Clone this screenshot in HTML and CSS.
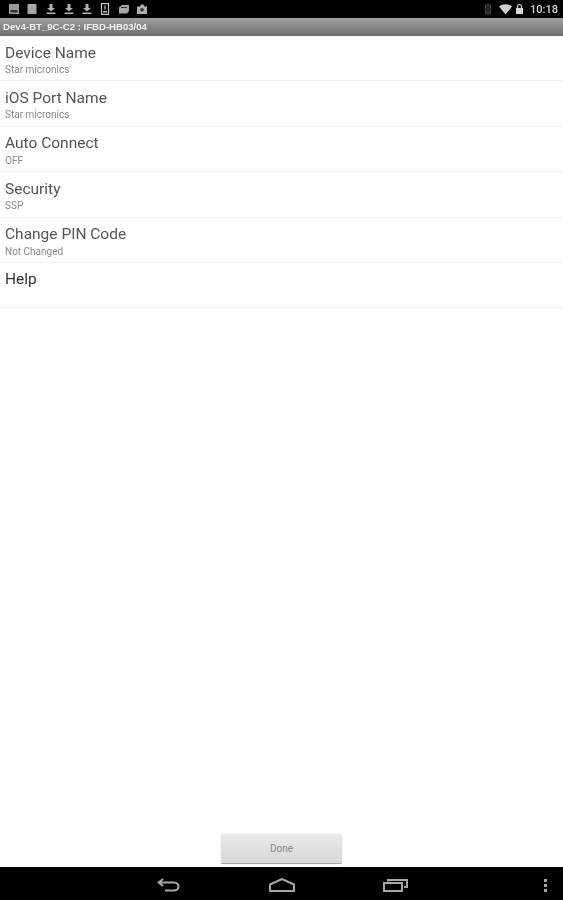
FILE: index.html
```html
<!DOCTYPE html>
<html lang="en">

<head>
    <meta charset="UTF-8">
    <meta name="viewport" content="width=device-width, initial-scale=1.0">
    <title>Device Settings</title>
    <link rel="stylesheet" href="styles.css">
</head>

<body>
    <div class="screen">
        <div class="status-bar">
            <div class="status-icons">
                <svg class="icon" width="12" height="12" viewBox="0 0 12 12"><path d="M1 1h10v10H1z" fill="#9a9a9a"/><path d="M2.500 7h7v2.500h-7z" fill="#333"/></svg>
                <svg class="icon" width="12" height="12" viewBox="0 0 12 12"><path d="M1.500 1h9v10h-9z" fill="#a8a8a8"/></svg>
                <svg class="icon" width="12" height="12" viewBox="0 0 12 12"><path d="M4.500 1h3v4H10L6 8.500 2 5h2.500zM1.500 9.500h9V11h-9z" fill="#b0b0b0"/></svg>
                <svg class="icon" width="12" height="12" viewBox="0 0 12 12"><path d="M4.500 1h3v4H10L6 8.500 2 5h2.500zM1.500 9.500h9V11h-9z" fill="#b0b0b0"/></svg>
                <svg class="icon" width="12" height="12" viewBox="0 0 12 12"><path d="M4.500 1h3v4H10L6 8.500 2 5h2.500zM1.500 9.500h9V11h-9z" fill="#b0b0b0"/></svg>
                <svg class="icon" width="12" height="12" viewBox="0 0 12 12"><path d="M2.500.7h7v10.600h-7z" fill="none" stroke="#c4c4c4" stroke-width="1.200"/><path d="M5.400 2.500h1.200v4H5.400zM4 8h4v1.500H4z" fill="#c4c4c4"/></svg>
                <svg class="icon" width="12" height="12" viewBox="0 0 12 12"><path d="M1 4.500 4 2h7v6l-2 2.500H1z" fill="#a8a8a8"/><path d="M3 4.500h6" stroke="#333"/></svg>
                <svg class="icon" width="12" height="12" viewBox="0 0 12 12"><path d="M1 3.500h3L5 1.500h2.500l1 2h2.500v7.500H1z" fill="#b0b0b0"/><circle cx="6" cy="6.800" r="1.800" fill="#333"/></svg>
            </div>
            <div class="status-right">
                <svg class="icon icon-battery" width="8" height="12" viewBox="0 0 8 12"><path d="M1.500 2h5v9h-5zM3 1h2" fill="#262626" stroke="#3c3c3c"/></svg>
                <svg class="icon" width="13" height="11" viewBox="0 0 13 11"><path d="M0 2.500C3.500-.5 9.500-.5 13 2.500L6.500 10.500z" fill="#d0d0d0"/></svg>
                <svg class="icon" width="9" height="12" viewBox="0 0 9 12"><path d="M2.500 5V3.500a2 2 0 0 1 4 0V5" fill="none" stroke="#d8d8d8" stroke-width="1.200"/><path d="M1 5h7v6H1z" fill="#d8d8d8"/></svg>
                <span class="clock">10:18</span>
            </div>
        </div>

        <div class="title-bar">Dev4-BT_9C-C2 : IFBD-HB03/04</div>

        <ul class="settings-list">
            <li class="setting-row">
                <div class="setting-name">Device Name</div>
                <div class="setting-value">Star micronics</div>
            </li>
            <li class="setting-row">
                <div class="setting-name">iOS Port Name</div>
                <div class="setting-value">Star micronics</div>
            </li>
            <li class="setting-row">
                <div class="setting-name">Auto Connect</div>
                <div class="setting-value">OFF</div>
            </li>
            <li class="setting-row">
                <div class="setting-name">Security</div>
                <div class="setting-value">SSP</div>
            </li>
            <li class="setting-row">
                <div class="setting-name">Change PIN Code</div>
                <div class="setting-value">Not Changed</div>
            </li>
            <li class="setting-row">
                <div class="setting-name setting-name-dark">Help</div>
            </li>
        </ul>

        <div class="button-bar">
            <button class="done-button">Done</button>
        </div>

        <div class="nav-bar">
            <div class="nav-buttons">
                <svg class="nav-back" width="24" height="14" viewBox="0 0 24 14"><path d="M6 1 1.500 4.500 6 8M2 4.500h15c6 0 6 8 0 8H8" fill="none" stroke="#a6a6a6" stroke-width="2"/></svg>
                <svg width="26" height="14" viewBox="0 0 26 14"><path d="M1 6.500 13 1l12 5.500v6.500H1z" fill="none" stroke="#a6a6a6" stroke-width="2"/></svg>
                <svg width="25" height="14" viewBox="0 0 25 14"><path d="M1 5h18v8H1z" fill="none" stroke="#a6a6a6" stroke-width="2"/><path d="M5 3.500V2h19v7h-3" fill="none" stroke="#a6a6a6" stroke-width="2"/></svg>
            </div>
            <div class="menu-dots">
                <span></span>
                <span></span>
                <span></span>
            </div>
        </div>
    </div>
</body>

</html>
```

FILE: styles.css
```css
* {
    margin: 0;
    padding: 0;
    box-sizing: border-box;
}

html,
body {
    height: 100%;
}

body {
    font-family: Roboto, "Liberation Sans", sans-serif;
    background-color: #fff;
    overflow: hidden;
}

.screen {
    display: flex;
    flex-direction: column;
    height: 900px;
}

.status-bar {
    display: flex;
    justify-content: space-between;
    align-items: center;
    height: 18px;
    padding: 0 5px 0 8px;
    background-color: #000;
}

.status-icons {
    display: flex;
    gap: 6.300px;
}

.status-right {
    display: flex;
    align-items: center;
    gap: 3px;
}

.icon {
    display: block;
    filter: blur(0.6px);
}

.icon-battery {
    margin-right: 4px;
}

.clock {
    margin-left: 3px;
    color: #d8d8d8;
    font-size: 11px;
    font-weight: 500;
    filter: blur(0.5px);
}

.title-bar {
    height: 18px;
    padding-left: 3px;
    background: linear-gradient(#a0a0a0, #6e6e6e);
    color: #f2f2f2;
    font-family: "Liberation Sans", Arial, sans-serif;
    font-size: 9.600px;
    font-weight: bold;
    line-height: 18px;
    filter: blur(0.5px);
}

.settings-list {
    list-style-type: none;
    flex: 1;
}

.setting-row {
    height: 45.400px;
    padding: 7.500px 5px 0;
    border-bottom: 1px solid #f1f1f1;
}

.setting-name {
    color: #555;
    font-size: 15.500px;
    line-height: 19px;
    filter: blur(0.4px);
}

.setting-name-dark {
    color: #333;
}

.setting-value {
    margin-top: 1.500px;
    color: #888;
    font-size: 10px;
    line-height: 11px;
    filter: blur(0.5px);
}

.button-bar {
    display: flex;
    justify-content: center;
    height: 33px;
}

.done-button {
    width: 121px;
    height: 30px;
    border: none;
    border-bottom: 1px solid #a8a8a8;
    border-radius: 1px;
    background: linear-gradient(#e9e9e9, #d8d8d8);
    box-shadow: 0 0 1px #bbb;
    color: #888;
    font-family: inherit;
    font-size: 10px;
}

.nav-bar {
    position: relative;
    display: flex;
    justify-content: center;
    align-items: center;
    height: 33px;
    background-color: #000;
}

.nav-buttons {
    display: flex;
    gap: 88px;
    margin-left: 1px;
    margin-top: 2px;
}

.nav-buttons svg {
    display: block;
    filter: blur(0.5px);
}

.menu-dots {
    position: absolute;
    top: 12px;
    right: 16px;
    display: flex;
    flex-direction: column;
    gap: 2px;
    filter: blur(0.4px);
}

.menu-dots span {
    width: 3px;
    height: 3px;
    background-color: #a6a6a6;
}
```
